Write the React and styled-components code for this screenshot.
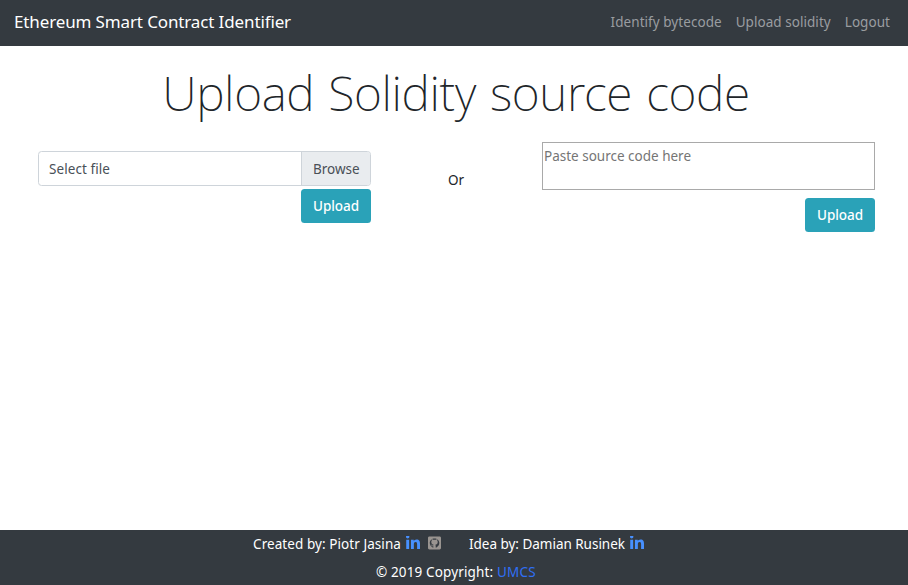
import React from "react";
import styled, { createGlobalStyle } from "styled-components";

const GlobalStyle = createGlobalStyle`
  * { box-sizing: border-box; }
  body {
    margin: 0;
    background: #fff;
    color: #212529;
    font-family: "Noto Sans", "Open Sans", sans-serif;
    font-size: 13.5px;
    line-height: 21px;
  }
`;

const Page = styled.div`
  display: flex;
  flex-direction: column;
  height: 585px;
`;

const Navbar = styled.header`
  display: flex;
  align-items: center;
  justify-content: space-between;
  height: 46px;
  padding: 0 18px 2px 14px;
  background: #343a40;
`;

const Brand = styled.a`
  padding-bottom: 2px;
  color: #fff;
  font-size: 17px;
  letter-spacing: -0.13px;
  white-space: nowrap;
`;

const Nav = styled.nav`
  display: flex;
  gap: 14px;
`;

const NavLink = styled.a`
  color: #9a9da0;
  white-space: nowrap;
  letter-spacing: 0.05px;
`;

const Main = styled.main`
  flex: 1;
`;

const Title = styled.h1`
  margin: 18px 0 0;
  padding-left: 4px;
  text-align: center;
  font-size: 48px;
  font-weight: 200;
  line-height: 58px;
  letter-spacing: -0.38px;
  word-spacing: 2px;
  white-space: nowrap;
`;

const Forms = styled.div`
  display: grid;
  grid-template-columns: 333px 171px 333px;
  margin: 20px 0 0 38px;
`;

const FileForm = styled.form`
  display: flex;
  flex-direction: column;
  align-items: flex-end;
  gap: 3px;
  padding-top: 9px;
`;

const CodeForm = styled(FileForm)`
  gap: 8px;
  padding-top: 0;
`;

const FilePicker = styled.label`
  display: flex;
  width: 100%;
  height: 35px;
  overflow: hidden;
  border: 1px solid #ced4da;
  border-radius: 3.5px;
  color: #495057;
  line-height: 34px;
`;

const FileName = styled.span`
  flex: 1;
  padding-left: 10px;
  letter-spacing: 0.07px;
`;

const Browse = styled.span`
  width: 69px;
  padding-left: 11px;
  border-left: 1px solid #ced4da;
  background: #e9ecef;
`;

const Button = styled.button`
  width: 70px;
  height: 34px;
  padding: 0;
  border: 0;
  border-radius: 3.5px;
  background: #2aa2b8;
  color: #fff;
  font: inherit;
  font-weight: 500;
  letter-spacing: -0.05px;
`;

const Divider = styled.div`
  padding: 28px 1px 0 0;
  text-align: center;
`;

const CodeInput = styled.textarea`
  display: block;
  width: 100%;
  height: 48px;
  padding: 3px 2px 3px 1px;
  border: 1px solid #a9a9a9;
  border-radius: 0;
  font: inherit;
  resize: none;
  &::placeholder { color: #757575; }
`;

const Footer = styled.footer`
  display: flex;
  flex-direction: column;
  align-items: center;
  gap: 7px;
  height: 55px;
  padding-top: 4px;
  background: #343a40;
  color: #fff;
`;

const Credits = styled.div`
  display: flex;
  gap: 28px;
  padding-right: 11px;
`;

const Credit = styled.div`
  display: flex;
  white-space: nowrap;
  letter-spacing: ${(p) => p.$spacing};
`;

const IconLink = styled.a`
  display: flex;
  margin-left: ${(p) => p.$gap};
  padding-top: 2px;
  color: ${(p) => p.$color};
`;

const Copyright = styled.div`
  padding-left: 4px;
  letter-spacing: 0.14px;
`;

const FooterLink = styled.a`
  color: #2f6ff5;
  letter-spacing: 0.25px;
`;

const LinkedIn = () => (
  <svg width="14" height="14" viewBox="0 0 448 448" fill="currentColor" aria-label="LinkedIn">
    <path d="M100.3 416H7.4V116.9h92.9V416zM53.8 76.1C24.1 76.1 0 51.500 0 21.800-.0-20 45-46 81-25 98-16 107.600 2 107.600 21.800c0 29.700-24.100 54.300-53.800 54.300zM448 416h-92.700V270.400c0-34.700-.7-79.200-48.300-79.200-48.300 0-55.700 37.700-55.700 76.700V416h-92.800V116.900h89.100v40.800h1.300c12.400-23.500 42.700-48.300 87.900-48.300 94 0 111.300 61.900 111.300 142.300V416z" />
  </svg>
);

const GitHub = () => (
  <svg width="13" height="14" viewBox="0 0 448 480" fill="currentColor" aria-label="GitHub">
    <path d="M400 16H48C21.500 16 0 37.500 0 64v352c0 26.500 21.500 48 48 48h352c26.500 0 48-21.500 48-48V64c0-26.500-21.500-48-48-48zM277 400c-8 1-12-4-12-10v-57c0-18-6-29-13-35 41-5 84-20 84-92 0-20-7-33-19-46 2-5 8-24-2-49-15-5-51 20-51 20-26-8-54-8-80 0 0 0-36-25-51-20-10 25-4 44-2 49-12 13-18 26-18 46 0 71 41 87 82 92-5 5-10 13-12 25-11 5-38 13-54-16-10-18-29-19-29-19-19 0-1 12-1 12 12 6 21 28 21 28 11 35 65 23 65 23v39c0 6-4 11-12 10-65-22-111-84-111-156 0-92 70-162 162-162s165 70 165 162c0 73-47 134-112 156z" />
  </svg>
);

export default function App() {
  return (
    <Page>
      <GlobalStyle />
      <Navbar>
        <Brand>Ethereum Smart Contract Identifier</Brand>
        <Nav>
          <NavLink>Identify bytecode</NavLink>
          <NavLink>Upload solidity</NavLink>
          <NavLink>Logout</NavLink>
        </Nav>
      </Navbar>
      <Main>
        <Title>Upload Solidity source code</Title>
        <Forms>
          <FileForm>
            <FilePicker>
              <FileName>Select file</FileName>
              <Browse>Browse</Browse>
            </FilePicker>
            <Button type="button">Upload</Button>
          </FileForm>
          <Divider>Or</Divider>
          <CodeForm>
            <CodeInput placeholder="Paste source code here" />
            <Button type="button">Upload</Button>
          </CodeForm>
        </Forms>
      </Main>
      <Footer>
        <Credits>
          <Credit $spacing="0.07px">
            Created by: Piotr Jasina
            <IconLink $gap="5px" $color="#4790ff"><LinkedIn /></IconLink>
            <IconLink $gap="8px" $color="#999490"><GitHub /></IconLink>
          </Credit>
          <Credit $spacing="-0.02px">
            Idea by: Damian Rusinek
            <IconLink $gap="5px" $color="#4790ff"><LinkedIn /></IconLink>
          </Credit>
        </Credits>
        <Copyright>
          © 2019 Copyright: <FooterLink>UMCS</FooterLink>
        </Copyright>
      </Footer>
    </Page>
  );
}
